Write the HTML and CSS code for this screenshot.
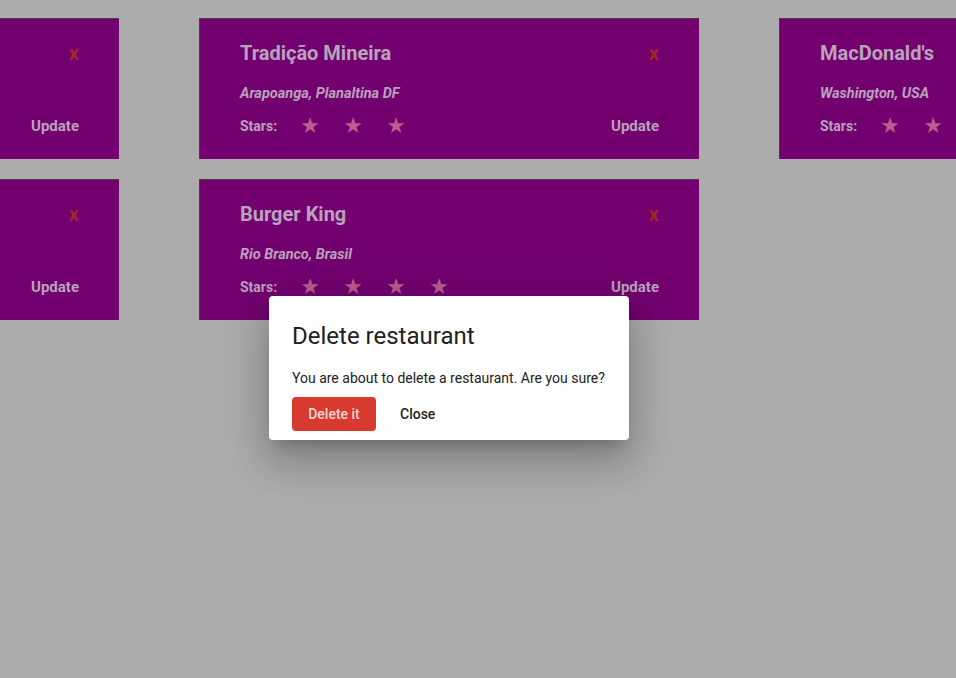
FILE: index.html
```html
<!DOCTYPE html>
<html>
<head>
<meta charset="utf-8">
<link rel="stylesheet" href="styles.css">
</head>
<body>
<div class="page">
  <div class="grid">
    <div class="card">
      <div class="top"><h2 class="title">Coco Bambu</h2><button class="del">x</button></div>
      <p class="loc">Brasília, DF</p>
      <div class="bottom"><div class="stars"><span class="lbl">Stars:</span><span class="st">★</span><span class="st">★</span><span class="st">★</span></div><button class="upd">Update</button></div>
    </div>
    <div class="card">
      <div class="top"><h2 class="title">Tradição Mineira</h2><button class="del">x</button></div>
      <p class="loc">Arapoanga, Planaltina DF</p>
      <div class="bottom"><div class="stars"><span class="lbl">Stars:</span><span class="st">★</span><span class="st">★</span><span class="st">★</span></div><button class="upd">Update</button></div>
    </div>
    <div class="card">
      <div class="top"><h2 class="title">MacDonald's</h2><button class="del">x</button></div>
      <p class="loc">Washington, USA</p>
      <div class="bottom"><div class="stars"><span class="lbl">Stars:</span><span class="st">★</span><span class="st">★</span></div><button class="upd">Update</button></div>
    </div>
    <div class="card">
      <div class="top"><h2 class="title">Outback</h2><button class="del">x</button></div>
      <p class="loc">São Paulo, SP</p>
      <div class="bottom"><div class="stars"><span class="lbl">Stars:</span><span class="st">★</span><span class="st">★</span></div><button class="upd">Update</button></div>
    </div>
    <div class="card">
      <div class="top"><h2 class="title">Burger King</h2><button class="del">x</button></div>
      <p class="loc">Rio Branco, Brasil</p>
      <div class="bottom"><div class="stars"><span class="lbl">Stars:</span><span class="st">★</span><span class="st">★</span><span class="st">★</span><span class="st">★</span></div><button class="upd">Update</button></div>
    </div>
  </div>
</div>
<div class="dialog">
  <h1 class="dtitle">Delete restaurant</h1>
  <p class="dtext">You are about to delete a restaurant. Are you sure?</p>
  <div class="actions"><button class="btn-del">Delete it</button><button class="btn-close">Close</button></div>
</div>
</body>
</html>
```
FILE: styles.css
```css
html, body { margin: 0; padding: 0; }
body {
  background: #acacac;
  font-family: Roboto, "Liberation Sans", sans-serif;
  width: 956px;
  height: 678px;
  overflow: hidden;
}
.page { padding-top: 18px; }
.grid {
  display: grid;
  grid-template-columns: repeat(3, 500px);
  column-gap: 80px;
  row-gap: 20px;
  margin-left: -381px;
}
.card {
  box-sizing: border-box;
  height: 141px;
  background: #72006f;
  border-top: 1px solid #4a3a4a;
  border-left: 1px solid #4a3a4a;
  padding: 21px 40px 0 40px;
}
.top { display: flex; justify-content: space-between; align-items: center; height: 26px; }
.title { margin: 0; font-size: 20px; font-weight: 700; color: #b9a2bb; line-height: 26px; }
.del {
  background: none; border: 0; padding: 0; font: 700 20px Roboto, sans-serif;
  color: #a1262c; line-height: 26px;
}
.loc {
  margin: 18px 0 0 0; font-size: 14.5px; font-style: italic; font-weight: 700;
  color: #b9a2bb; line-height: 20px;
}
.bottom { display: flex; justify-content: space-between; align-items: center; margin-top: 10px; height: 24px; }
.stars { display: flex; align-items: center; }
.lbl { font-size: 14px; font-weight: 700; color: #b9a2bb; margin-right: 23px; }
.st { color: #b95d90; font-size: 22px; width: 20px; text-align: center; margin-right: 23px; font-family: "DejaVu Sans", sans-serif; line-height: 24px; }
.upd {
  background: none; border: 0; padding: 0; font: 700 15px Roboto, sans-serif;
  color: #b9a2bb;
}
.dialog {
  position: absolute;
  left: 269px;
  top: 296px;
  width: 360px;
  height: 144px;
  box-sizing: border-box;
  background: #fff;
  border-radius: 4px;
  padding: 24px 16px 0 23px;
  box-shadow: 0 11px 15px -7px rgba(0,0,0,.2), 0 24px 38px 3px rgba(0,0,0,.14), 0 9px 46px 8px rgba(0,0,0,.12);
}
.dtitle { margin: 0; font-size: 24px; font-weight: 400; color: #212121; line-height: 32px; }
.dtext { margin: 16px 0 0 0; font-size: 14px; color: #222; line-height: 20px; white-space: nowrap; }
.actions { display: flex; align-items: center; margin-top: 9px; gap: 8px; }
.btn-del {
  background: #d93a2f; color: #f7d9d5; border: 0; border-radius: 4px;
  font: 500 14px Roboto, sans-serif; height: 34px; width: 84px; padding: 0;
}
.btn-close {
  background: none; border: 0; font: 500 14px Roboto, sans-serif; color: #222;
  height: 34px; padding: 0 16px;
}
```
